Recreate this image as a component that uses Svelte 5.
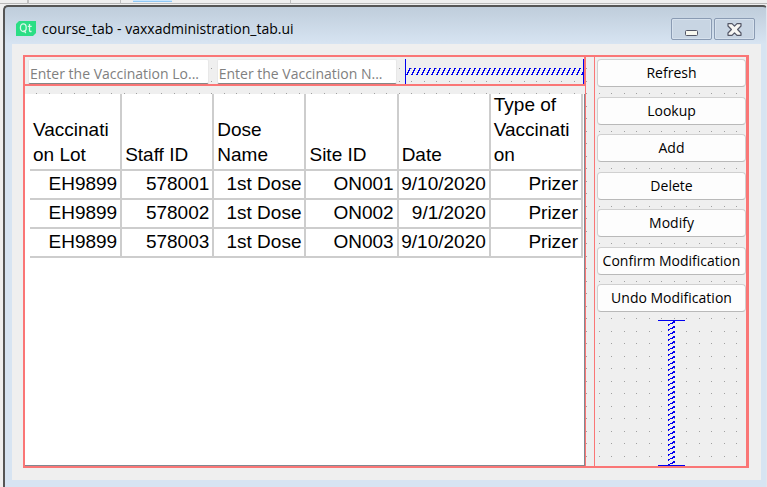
<script>
  const columns = ['Vaccination Lot', 'Staff ID', 'Dose Name', 'Site ID', 'Date', 'Type of Vaccination'];
  const rows = [
    ['EH9899', '578001', '1st Dose', 'ON001', '9/10/2020', 'Prizer'],
    ['EH9899', '578002', '1st Dose', 'ON002', '9/1/2020', 'Prizer'],
    ['EH9899', '578003', '1st Dose', 'ON003', '9/10/2020', 'Prizer']
  ];
  const actions = ['Refresh', 'Lookup', 'Add', 'Delete', 'Modify', 'Confirm Modification', 'Undo Modification'];
</script>

<div class="desk">
  <div class="strip" aria-hidden="true">
    <i class="tool"></i><i class="tool wide"></i><i class="tool open"><b></b></i><i class="tool end"></i>
  </div>
  <section class="window">
    <header>
      <svg class="logo" width="20" height="15" viewBox="0 0 20 15" aria-hidden="true">
        <path d="M3 0H20V12L17 15H0V3Z" fill="#2cde85" />
        <g fill="none" stroke="#d9f8e8" stroke-width="1.3">
          <ellipse cx="7.3" cy="6.7" rx="2.9" ry="3.8" />
          <path d="M7.8 9.4L9.8 12M13.5 3V9.5Q13.5 10.8 15.6 10.4M11.8 5.3H15.7" />
        </g>
      </svg>
      <h1>course_tab - vaxxadministration_tab.ui</h1>
      <button class="caption" aria-label="Minimize">
        <svg width="15" height="15" viewBox="0 0 15 15"><rect x="1.5" y="8.5" width="12" height="5" rx="1" fill="#f7f7ee" stroke="#535666" /></svg>
      </button>
      <button class="caption" aria-label="Close">
        <svg width="15" height="13" viewBox="0 0 15 13">
          <path d="M1 .7H5L7.5 3.2L10 .7H14V3L10.6 6.5L14 10V12.3H10L7.5 9.8L5 12.3H1V10L4.4 6.5L1 3Z" fill="#f7f7f4" stroke="#535666" stroke-width="1.2" stroke-linejoin="round" />
        </svg>
      </button>
    </header>

    <div class="form">
      <main>
        <div class="left">
          <div class="filters">
            <input aria-label="Vaccination lot" placeholder="Enter the Vaccination Lo..." />
            <input aria-label="Vaccination name" placeholder="Enter the Vaccination N..." />
            <div class="hspace">
              <svg width="100%" height="7" aria-hidden="true" shape-rendering="crispEdges">
                <defs>
                  <pattern id="hs" width="5" height="7" patternUnits="userSpaceOnUse">
                    <path d="M3 0H5V1H4V3H3V5H2V7H0V6H1V4H2V2H3Z" fill="#0000f0" />
                  </pattern>
                </defs>
                <rect width="100%" height="7" fill="url(#hs)" />
              </svg>
            </div>
          </div>
          <div class="sheet">
            <table>
              <thead>
                <tr>{#each columns as column}<th scope="col">{column}</th>{/each}</tr>
              </thead>
              <tbody>
                {#each rows as row}
                  <tr>{#each row as cell}<td>{cell}</td>{/each}</tr>
                {/each}
              </tbody>
            </table>
          </div>
        </div>
        <aside>
          <div class="actions">
            {#each actions as action}<button class="action">{action}</button>{/each}
          </div>
          <div class="vspace">
            <svg width="7" height="100%" aria-hidden="true" shape-rendering="crispEdges">
              <defs>
                <pattern id="vs" width="7" height="5" patternUnits="userSpaceOnUse">
                  <path d="M5 0H7V2H5V3H2V4H1V5H0V3H2V2H4V1H5Z" fill="#0000f0" />
                </pattern>
              </defs>
              <rect width="7" height="100%" fill="url(#vs)" />
            </svg>
          </div>
        </aside>
      </main>
    </div>
  </section>
</div>

<style>
  :global(body) { background: #f0f0f0; }
  * { box-sizing: border-box; }
  .desk {
    height: 100vh;
    padding-left: 3px;
    overflow: hidden;
    display: flex;
    flex-direction: column;
    background: #efefef;
    font-family: "Open Sans", "Noto Sans", sans-serif;
    color: #000;
  }
  .strip {
    display: flex;
    height: 5px;
    margin-left: -3px;
    padding-bottom: 1px;
  }
  .tool { width: 29px; border-right: 2px solid #c0c0c0; border-bottom: 1px solid #b8b8b8; }
  .tool.wide { width: 92px; border-right-width: 1px; }
  .tool.open { width: 170px; border-right-width: 1px; padding-left: 12px; }
  .tool.open b { display: block; width: 39px; height: 2px; background: #cce8ff; border-bottom: 1px solid #90c8f6; }
  .tool.end { flex: 1; border-right: 0; }
  .window {
    flex: 1;
    min-height: 0;
    display: flex;
    flex-direction: column;
    padding: 0 5px 7px 7px;
    border: 1px solid #555;
    border-top-width: 2px;
    border-left-width: 2px;
    border-right-color: #dfe6ee;
    border-bottom: 0;
    border-radius: 5px 4px 0 0;
    background: linear-gradient(#bfcddb, #d7e4f2 37px);
  }
  header { display: flex; align-items: flex-start; height: 37px; padding: 11px 6px 0 4px; }
  .logo { flex: none; margin-top: 3px; }
  h1 { flex: 1; margin: 1px 0 0 6px; font-size: 14px; line-height: 20px; font-weight: 400; white-space: nowrap; }
  .caption {
    display: flex;
    align-items: center;
    justify-content: center;
    width: 41px;
    height: 22px;
    margin-left: 2px;
    padding: 0;
    border: 1px solid #8a9bb3;
    border-radius: 2px;
    background: #c8d5e3;
    box-shadow: inset 0 0 0 1px #d6e1ed;
  }
  .form { flex: 1; min-height: 0; display: flex; padding: 11px 12px 12px 11px; background: #efefef; }
  main {
    flex: 1;
    min-width: 0;
    display: flex;
    gap: 8px;
    border: 2px solid #fa7676;
    border-right-width: 1px;
    background-color: #efefef;
    background-image: url("data:image/svg+xml,%3Csvg xmlns='http://www.w3.org/2000/svg' width='25' height='25' shape-rendering='crispEdges'%3E%3Cpath d='M11 11h1v1h-1zM24 11h1v1h-1zM11 24h1v1h-1zM24 24h1v1h-1z' fill='%23a0a0a0'/%3E%3C/svg%3E");
  }
  .left { flex: 1; min-width: 0; display: flex; flex-direction: column; gap: 8px; border-right: 1px solid #fa7676; }
  .filters { display: flex; gap: 8px; height: 29px; padding: 2px 0 0 3px; border-bottom: 2px solid #fa7676; border-right: 1px solid #fa7676; }
  .filters input {
    flex: 1;
    min-width: 0;
    height: 25px;
    padding: 4px 1px 0;
    border: 1px solid #e8e8e8;
    border-bottom-color: #868686;
    border-radius: 2px;
    background: #fff;
    font: 14px/20px "Open Sans", "Noto Sans", sans-serif;
  }
  .filters input::placeholder { color: #808080; opacity: 1; }
  .hspace { flex: 1; display: flex; align-items: center; border: 1px solid #0000f0; border-width: 0 1px; }
  .sheet { flex: 1; min-height: 0; padding: 0 1px 0 5px; background: #fff; border-right: 1px solid #828790; border-bottom: 1px solid #828790; overflow: hidden; }
  table { width: 100%; margin-top: -2px; table-layout: fixed; border-collapse: separate; border-spacing: 0; font-family: "Liberation Sans", Arial, sans-serif; font-size: 19px; line-height: 26px; }
  th, td { border-right: 2px solid #cdcdcd; border-bottom: 2px solid #cdcdcd; white-space: nowrap; }
  th { height: 79px; padding: 0 6px 2px 3px; vertical-align: bottom; text-align: left; font-weight: 400; white-space: normal; word-break: break-word; line-height: 25px; }
  td { height: 29px; padding: 0 3px 1px 0; text-align: right; }
  aside { flex: none; width: 154px; display: flex; flex-direction: column; gap: 8px; padding: 2px 0 0 2px; border: solid #fa7676; border-width: 0 2px 0 1px; }
  .actions { flex: none; height: 253px; display: flex; flex-direction: column; justify-content: space-between; }
  .action {
    flex: none;
    height: 28px;
    padding: 0;
    border: 1px solid #d0d0d0;
    border-bottom-color: #b9b9b9;
    border-radius: 4px;
    background: #fdfdfd;
    color: #000;
    font: 14px/20px "Open Sans", "Noto Sans", sans-serif;
    white-space: nowrap;
  }
  .vspace { flex: 1; min-height: 0; align-self: center; width: 27px; display: flex; justify-content: center; border: 1px solid #0000f0; border-width: 1px 0; }
</style>
